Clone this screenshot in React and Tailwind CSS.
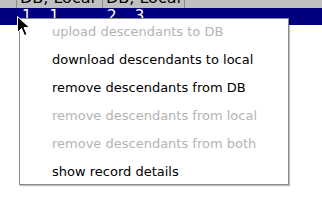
import React from 'react';

const items = [
  { label: 'upload descendants to DB', enabled: false },
  { label: 'download descendants to local', enabled: true },
  { label: 'remove descendants from DB', enabled: true },
  { label: 'remove descendants from local', enabled: false },
  { label: 'remove descendants from both', enabled: false },
  { label: 'show record details', enabled: true },
];

function Cursor() {
  return (
    <svg className="absolute left-[17px] top-[16px]" width="13" height="21" viewBox="0 0 13 21">
      <path
        d="M0.5 0.5 L0.5 16.5 L4.5 12.5 L7.5 19.5 L10 18.5 L7 11.5 L12.5 11.5 Z"
        fill="#000"
        stroke="#fff"
        strokeWidth="1"
      />
    </svg>
  );
}

export default function App() {
  return (
    <div className="relative w-[322px] h-[212px] overflow-hidden bg-white">
      {/* table header, scrolled so only the bottom of the text shows */}
      <div className="flex h-[8px] overflow-hidden bg-[#c0c0c0] font-['DejaVu_Sans',sans-serif] text-[16px] leading-[16px] text-black whitespace-nowrap">
        <div className="w-[17px] shrink-0 border-r border-[#8c8c8c]" />
        <div className="w-[86px] shrink-0 overflow-hidden -mt-[10px] pl-[3px] border-r border-[#8c8c8c]">DB, Local</div>
        <div className="w-[82px] shrink-0 overflow-hidden -mt-[10px] pl-[3px] border-r border-[#8c8c8c]">DB, Local</div>
        <div className="flex-1" />
      </div>
      <div className="flex h-[17px] items-center bg-[#000080] font-['DejaVu_Sans',sans-serif] text-[15px] leading-[17px] text-white">
        <span className="ml-[22px]">1</span>
        <span className="ml-[18px]">1</span>
        <span className="ml-[48px]">2</span>
        <span className="ml-[18px]">3</span>
      </div>

      <div className="absolute left-[19px] top-[18px] w-[270px] h-[167px] overflow-hidden border border-[#8a8a8a] bg-white shadow-[1px_1px_1px_rgba(0,0,0,0.25)] font-['DejaVu_Sans',sans-serif] text-[13px]">
        <div className="-mt-[1px]">
          {items.map((it) => (
            <div
              key={it.label}
              className={`h-[28px] leading-[28px] pl-[32px] whitespace-nowrap ${it.enabled ? 'text-black' : 'text-[#b4b4b4]'}`}
            >
              {it.label}
            </div>
          ))}
        </div>
      </div>

      <Cursor />
    </div>
  );
}
